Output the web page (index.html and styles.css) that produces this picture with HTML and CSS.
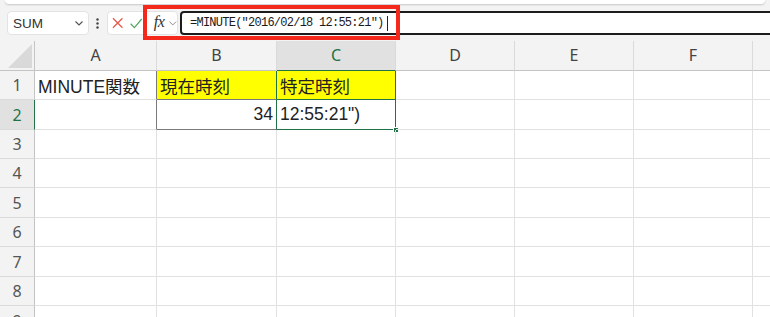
FILE: index.html
```html
<!DOCTYPE html>
<html lang="ja">
<head>
<meta charset="utf-8">
<link rel="stylesheet" href="styles.css">
</head>
<body>
<div class="app">
  <div class="ribbon-edge"></div>
  <div class="formula-bar">
    <div class="namebox">
      <span class="namebox-text">SUM</span>
      <svg class="chev" width="8" height="5" viewBox="0 0 8 5"><path d="M0.5 0.5 L4 4 L7.5 0.5" fill="none" stroke="#555" stroke-width="1.2"/></svg>
    </div>
    <svg class="dots" width="3" height="11" viewBox="0 0 3 11"><circle cx="1.5" cy="1.5" r="1.2" fill="#444"/><circle cx="1.5" cy="5.5" r="1.2" fill="#444"/><circle cx="1.5" cy="9.5" r="1.2" fill="#444"/></svg>
    <div class="btnbox">
      <svg width="12" height="12" viewBox="0 0 12 12"><path d="M1 1 L11 11 M11 1 L1 11" stroke="#e8584c" stroke-width="1.3" fill="none"/></svg>
      <svg class="check" width="13" height="11" viewBox="0 0 13 11"><path d="M0.7 5.8 L4.6 9.8 L12.3 0.8" stroke="#52a860" stroke-width="1.3" fill="none"/></svg>
      <span class="fx">fx</span>
      <svg class="chev2" width="8" height="5" viewBox="0 0 8 5"><path d="M0.5 0.5 L4 4 L7.5 0.5" fill="none" stroke="#888" stroke-width="1"/></svg>
    </div>
    <div class="formula-input">
      <span class="formula-text">=MINUTE("2016/02/18 12:55:21")</span><span class="caret"></span>
    </div>
    <div class="annot"></div>
  </div>

  <div class="sheet">
    <div class="corner"><svg width="24" height="24" viewBox="0 0 24 24"><path d="M24 0 L24 24 L0 24 Z" fill="#d9d9d9"/></svg></div>
    <div class="colhdr">A</div>
    <div class="colhdr">B</div>
    <div class="colhdr colhdr-sel">C</div>
    <div class="colhdr">D</div>
    <div class="colhdr">E</div>
    <div class="colhdr">F</div>
    <div class="colhdr"></div>

    <div class="rowhdr">1</div>
    <div class="cell b-right-dark">MINUTE関数</div>
    <div class="cell yellow b-bottom-dark b-right-green">現在時刻</div>
    <div class="cell yellow b-bottom-green b-right-green">特定時刻</div>
    <div class="cell"></div>
    <div class="cell"></div>
    <div class="cell"></div>
    <div class="cell"></div>

    <div class="rowhdr rowhdr-sel">2</div>
    <div class="cell b-right-dark"></div>
    <div class="cell num b-bottom-dark b-right-green">34</div>
    <div class="cell active b-bottom-green b-right-green">12:55:21")<span class="handle"></span></div>
    <div class="cell"></div>
    <div class="cell"></div>
    <div class="cell"></div>
    <div class="cell"></div>

    <div class="rowhdr">3</div>
    <div class="cell"></div><div class="cell"></div><div class="cell"></div><div class="cell"></div><div class="cell"></div><div class="cell"></div><div class="cell"></div>
    <div class="rowhdr">4</div>
    <div class="cell"></div><div class="cell"></div><div class="cell"></div><div class="cell"></div><div class="cell"></div><div class="cell"></div><div class="cell"></div>
    <div class="rowhdr">5</div>
    <div class="cell"></div><div class="cell"></div><div class="cell"></div><div class="cell"></div><div class="cell"></div><div class="cell"></div><div class="cell"></div>
    <div class="rowhdr">6</div>
    <div class="cell"></div><div class="cell"></div><div class="cell"></div><div class="cell"></div><div class="cell"></div><div class="cell"></div><div class="cell"></div>
    <div class="rowhdr">7</div>
    <div class="cell"></div><div class="cell"></div><div class="cell"></div><div class="cell"></div><div class="cell"></div><div class="cell"></div><div class="cell"></div>
    <div class="rowhdr">8</div>
    <div class="cell"></div><div class="cell"></div><div class="cell"></div><div class="cell"></div><div class="cell"></div><div class="cell"></div><div class="cell"></div>
    <div class="rowhdr">9</div>
    <div class="cell"></div><div class="cell"></div><div class="cell"></div><div class="cell"></div><div class="cell"></div><div class="cell"></div><div class="cell"></div>
  </div>
</div>
</body>
</html>
```
FILE: styles.css
```css
* { box-sizing: border-box; }
html, body { margin: 0; padding: 0; }
body {
  width: 770px;
  height: 317px;
  overflow: hidden;
  background: #f3f3f3;
  font-family: "Liberation Sans", "Noto Sans CJK JP", sans-serif;
}
.app { width: 770px; height: 317px; overflow: hidden; }

.ribbon-edge {
  height: 4px;
  margin: 0 5px;
  background: #ffffff;
  border-radius: 0 0 6px 6px;
  box-shadow: 0 1px 2px rgba(0,0,0,0.18);
}

.formula-bar {
  position: relative;
  height: 37px;
  padding: 7px 0 0 7px;
  display: flex;
  align-items: flex-start;
}

.namebox {
  width: 82px;
  height: 24px;
  background: #fff;
  border: 1px solid #e3e3e3;
  border-radius: 4px;
  display: flex;
  align-items: center;
  padding: 0 0 0 5px;
}
.namebox-text { font-size: 13.5px; color: #333; flex: 1; padding-top: 1px; }
.chev { margin-right: 5px; margin-top: 1px; }

.dots { margin: 7px 0 0 7px; }

.btnbox {
  margin-left: 8px;
  width: 71px;
  height: 24px;
  background: #fff;
  border: 1px solid #e3e3e3;
  border-radius: 4px;
  display: flex;
  align-items: center;
  padding-left: 4px;
}
.check { margin-left: 7px; }
.fx {
  margin-left: 11px;
  font-family: "Liberation Serif", serif;
  font-style: italic;
  font-size: 16px;
  color: #333;
  letter-spacing: -0.5px;
  padding-bottom: 2px;
}
.chev2 { margin-left: 5px; margin-top: 1px; }

.formula-input {
  margin-left: 2px;
  flex: 1;
  margin-right: -10px;
  height: 24px;
  background: #fff;
  border: 2px solid #1c1c1c;
  border-radius: 4px 0 0 4px;
  display: flex;
  align-items: center;
  padding-left: 8px;
}
.formula-text {
  font-family: "Liberation Mono", monospace;
  font-size: 12px;
  letter-spacing: -0.75px;
  color: #1a1a1a;
  white-space: pre;
}
.caret {
  display: inline-block;
  width: 1px;
  height: 15px;
  background: #222;
  margin-left: 3px;
}

.annot {
  position: absolute;
  left: 143px;
  top: 1px;
  width: 257px;
  height: 35px;
  border: 4px solid #f4291b;
  pointer-events: none;
}

.sheet {
  display: grid;
  grid-template-columns: 35px 122px 120px 119px 119px 119px 119px 119px;
  grid-template-rows: 30px 29px 30px 29px 29px 30px 29px 30px 29px 30px;
  background: #fff;
}

.corner {
  background: #f3f3f3;
  border-right: 1px solid #c4c4c4;
  border-bottom: 1px solid #c4c4c4;
  display: flex;
  align-items: flex-end;
  justify-content: flex-end;
  padding: 0 2px 2px 0;
}

.colhdr {
  background: #f3f3f3;
  border-right: 1px solid #dadada;
  border-bottom: 1px solid #c4c4c4;
  display: flex;
  align-items: center;
  justify-content: center;
  font-family: "Noto Sans", "Liberation Sans", sans-serif;
  font-size: 16px;
  color: #444;
  padding-bottom: 1px;
}
.colhdr-sel {
  background: #e1e1e1;
  color: #217346;
  border-bottom: 1px solid #217346;
}

.rowhdr {
  background: #f3f3f3;
  border-right: 1px solid #c4c4c4;
  border-bottom: 1px solid #dadada;
  display: flex;
  align-items: center;
  justify-content: center;
  font-family: "Noto Sans", "Liberation Sans", sans-serif;
  font-size: 16px;
  color: #555;
}
.rowhdr-sel {
  background: #e1e1e1;
  color: #217346;
  border-right: 1px solid #217346;
}

.cell {
  position: relative;
  border-right: 1px solid #e1e1e1;
  border-bottom: 1px solid #e1e1e1;
  display: flex;
  align-items: center;
  padding: 0 3px 0 3px;
  font-size: 17.5px;
  color: #222;
  white-space: nowrap;
}
.yellow { background: #ffff00; }
.num { justify-content: flex-end; }
.b-right-dark { border-right-color: #7a7a7a; }
.b-bottom-dark { border-bottom-color: #7a7a7a; }
.b-right-green { border-right-color: #217346; }
.b-bottom-green { border-bottom-color: #217346; }

.handle {
  position: absolute;
  right: -4px;
  bottom: -4px;
  width: 6px;
  height: 6px;
  background: #217346;
  border: 1px solid #fff;
}
```
